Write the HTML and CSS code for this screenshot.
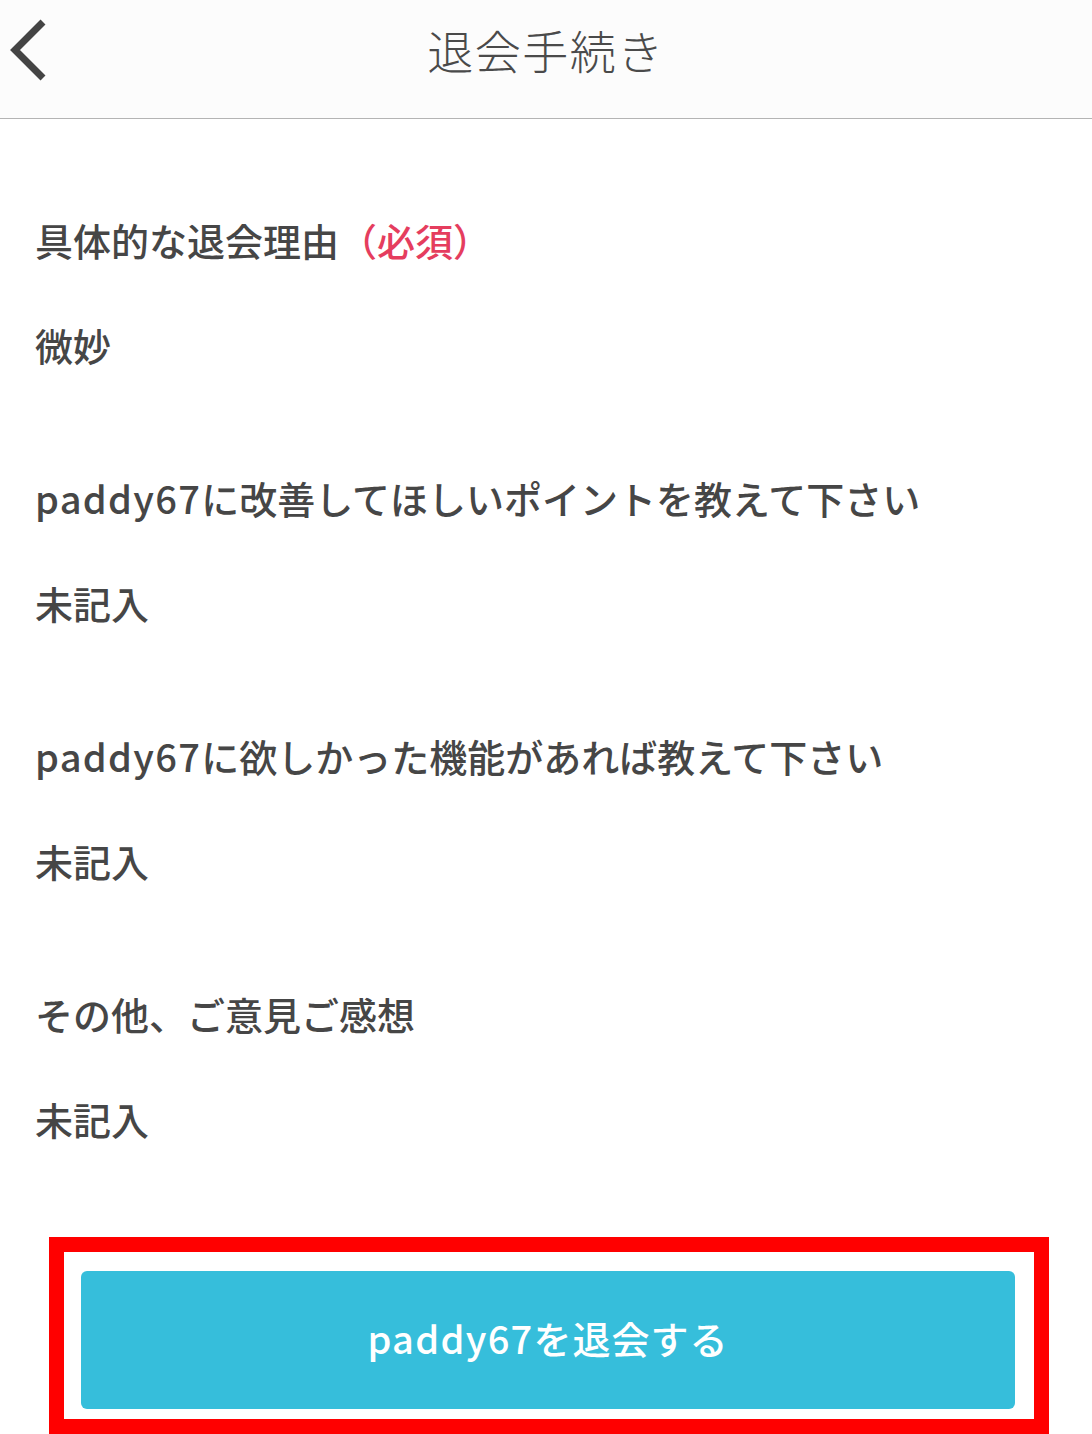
FILE: index.html
```html
<!DOCTYPE html>
<html lang="ja">
<head>
<meta charset="utf-8">
<title>退会手続き</title>
<link rel="stylesheet" href="styles.css">
</head>
<body>
<header class="nav">
  <a class="nav-back" href="#" aria-label="戻る">
    <svg width="60" height="100" viewBox="0 0 60 100"><path d="M43 22 L15 50 L43 78" fill="none" stroke="#444" stroke-width="7" stroke-linejoin="miter"/></svg>
  </a>
  <h1 class="nav-title">退会手続き</h1>
</header>
<main class="content">
  <section class="item">
    <p class="label">具体的な退会理由<span class="req">（必須）</span></p>
    <p class="value">微妙</p>
  </section>
  <section class="item">
    <p class="label"><span class="latin">paddy67</span>に改善してほしいポイントを教えて下さい</p>
    <p class="value">未記入</p>
  </section>
  <section class="item">
    <p class="label"><span class="latin">paddy67</span>に欲しかった機能があれば教えて下さい</p>
    <p class="value">未記入</p>
  </section>
  <section class="item">
    <p class="label">その他、ご意見ご感想</p>
    <p class="value">未記入</p>
  </section>
</main>
<div class="highlight">
  <button class="submit" type="button"><span class="latin">paddy67</span>を退会する</button>
</div>
</body>
</html>
```
FILE: styles.css
```css
* { box-sizing: border-box; }
html, body { margin: 0; padding: 0; background: #fff; }
body {
  font-family: "Noto Sans CJK JP", "Noto Sans", sans-serif;
  color: #444;
  width: 1092px;
  height: 1434px;
  overflow: hidden;
}
.nav {
  height: 119px;
  background: #fcfcfc;
  border-bottom: 1px solid #b4b4b4;
  display: flex;
  align-items: center;
  justify-content: center;
  position: relative;
}
.nav-back {
  position: absolute;
  left: 0;
  top: 0;
  display: block;
  width: 60px;
  height: 100px;
}
.nav-back svg { display: block; }
.nav-title {
  margin: 0 0 20px 0;
  font-size: 46px;
  font-weight: 300;
  color: #4a4a4a;
  letter-spacing: 1.5px;
}
.content {
  padding: 95px 0 0 35px;
  display: flex;
  flex-direction: column;
  gap: 101px;
}
.item {
  display: flex;
  flex-direction: column;
  gap: 53px;
}
.label, .value {
  margin: 0;
  font-size: 38px;
  line-height: 52px;
  font-weight: 500;
  color: #464646;
  white-space: nowrap;
}
.latin { letter-spacing: 1.3px; }
.req { color: #e53d5e; }
.highlight {
  margin: 92px 0 0 49px;
  width: 1000px;
  border: 15px solid #ff0000;
  padding: 19px 19px 10px 17px;
  background: #fff;
}
.submit {
  display: flex;
  align-items: center;
  justify-content: center;
  width: 100%;
  height: 138px;
  border: 0;
  border-radius: 6px;
  background: #36bedb;
  color: #fff;
  font-family: "Noto Sans CJK JP", "Noto Sans", sans-serif;
  font-size: 38px;
  font-weight: 500;
  padding: 0 0 5px 0;
  letter-spacing: 1px;
}
```
